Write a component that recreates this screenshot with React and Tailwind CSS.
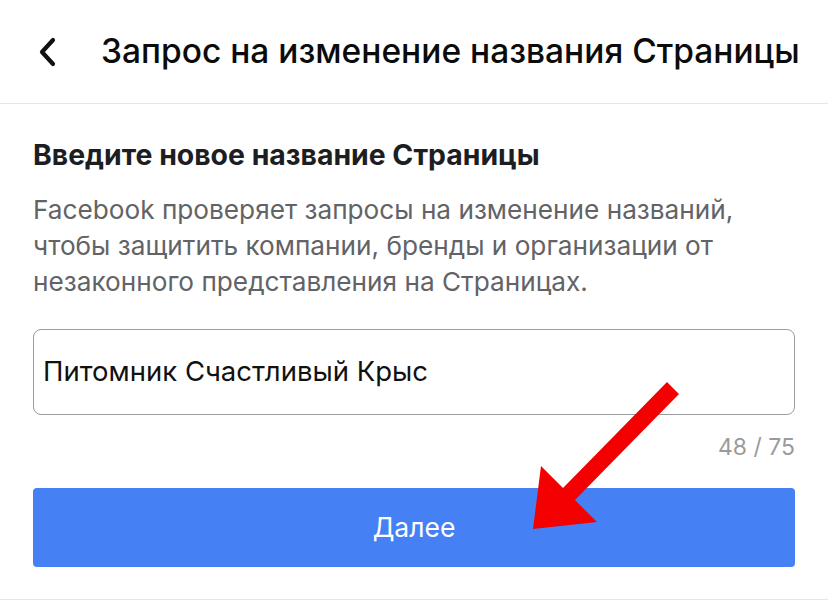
import React from "react";

const Arrow = () => (
    <svg className="absolute left-0 top-0 pointer-events-none" width="828" height="601" viewBox="0 0 828 601">
        <polygon
            points="667,382 679,394 575,500 597,522 533,529 541,466 563,488"
            fill="#f40000"
        />
    </svg>
);

export default function App() {
    return (
        <div className="relative w-[828px] h-[601px] bg-white overflow-hidden font-['Inter',sans-serif]">
            <div className="h-[104px] flex items-center border-b border-[#e6e6e6]">
                <svg className="ml-[36px]" width="22" height="30" viewBox="0 0 22 30">
                    <path d="M17 3 L6 15 L17 27" fill="none" stroke="#111" strokeWidth="4.2" strokeLinecap="round" strokeLinejoin="round" />
                </svg>
                <h1 className="ml-[43px] text-[33.5px] leading-none text-[#0b0b0b] font-medium">Запрос на изменение названия Страницы</h1>
            </div>
            <div className="px-[33px] pt-[33px] pb-[32px] border-b border-[#e6e6e6]">
                <h2 className="text-[28.4px] leading-[36px] font-bold text-[#1c1e21]">Введите новое название Страницы</h2>
                <p className="mt-[19px] text-[26.2px] leading-[36px] text-[#626366]">
                    Facebook проверяет запросы на изменение названий, чтобы защитить компании, бренды и организации от незаконного представления на Страницах.
                </p>
                <div className="mt-[29px] h-[86px] rounded-[8px] border-[1.5px] border-[#9c9c9c] flex items-center px-[9px]">
                    <span className="text-[27.5px] text-[#111]">Питомник Счастливый Крыс</span>
                </div>
                <div className="mt-[17px] text-right text-[23px] leading-[30px] text-[#9b9b9b]">48 / 75</div>
                <button className="mt-[26px] w-full h-[79px] rounded-[4px] bg-[#4680f5] text-white text-[26.5px]">Далее</button>
            </div>
            <Arrow />
        </div>
    );
}
